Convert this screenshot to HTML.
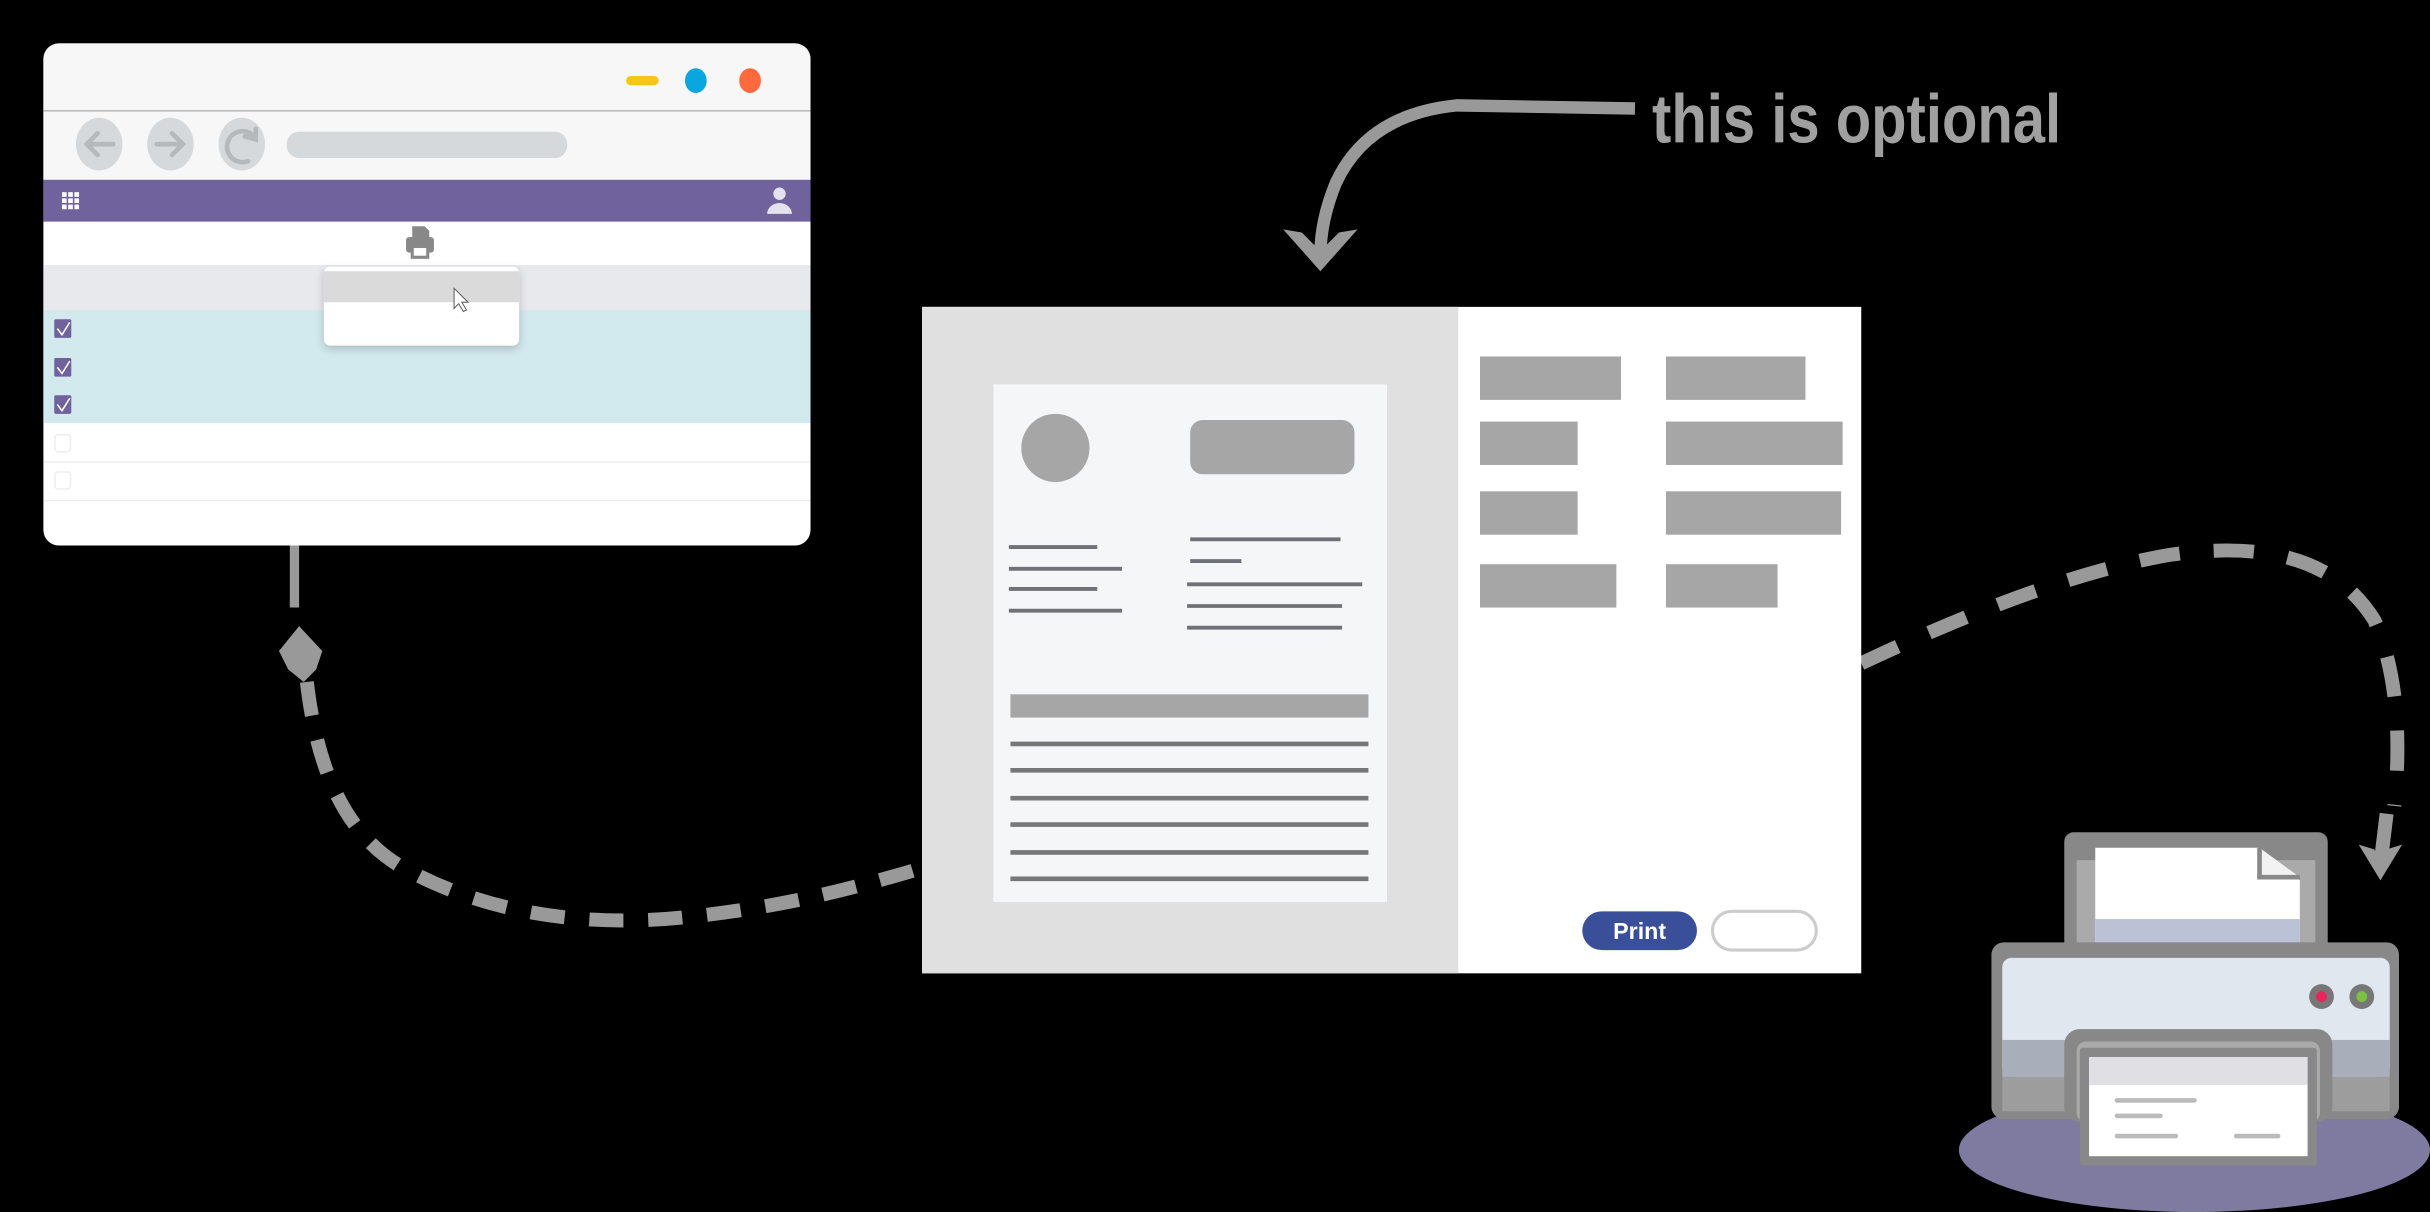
<!DOCTYPE html>
<html><head><meta charset="utf-8"><style>
html,body{margin:0;padding:0;background:#000;width:2430px;height:1212px;overflow:hidden}
svg{display:block}
</style></head><body>
<svg width="2430" height="1212" viewBox="0 0 1568 782" preserveAspectRatio="none" xmlns="http://www.w3.org/2000/svg">
<rect width="1568" height="782" fill="#000"/>
<g fill="none" stroke="#999" stroke-width="9">
<path d="M190 352 L190 392" stroke-width="6"/>
<path d="M198 440 C205 500 225 545 270 565 C320 590 380 598 440 592 C500 586 545 575 595 560" stroke-dasharray="22 16"/>
<path d="M1201 428 C1250 405 1330 370 1400 358 C1470 348 1510 365 1532 400 C1550 440 1548 490 1545 520" stroke-dasharray="26 22"/>
<path d="M1540 525 L1536 558"/>
<path d="M1055 70 L940 68 C900 72 875 90 862 118 C855 135 852 150 852 165" stroke-width="8"/>
</g>
<g fill="#999">
<polygon points="193,404 180,420 186,432 196,440 204,432 208,420"/>
<polygon points="828,148 852,175 876,148 864,150 852,162 840,150"/>
<polygon points="1522,545 1536,568 1550,545 1540,548 1536,556 1532,548"/>
</g>
<text x="1066" y="92" textLength="264" lengthAdjust="spacingAndGlyphs" font-family="'Liberation Sans',sans-serif" font-weight="bold" font-size="44" fill="#a0a0a0">this is optional</text>

<rect x="28" y="28" width="495" height="324" rx="10" fill="#fff"/>
<path d="M28 72 V38 a10 10 0 0 1 10 -10 H513 a10 10 0 0 1 10 10 V72 Z" fill="#f7f7f7"/>
<rect x="28" y="72" width="495" height="44" fill="#f7f7f7"/>
<line x1="28" y1="71.5" x2="523" y2="71.5" stroke="#bbb" stroke-width="1"/>
<rect x="404" y="49" width="21" height="6" rx="3" fill="#f5c518"/>
<ellipse cx="449" cy="52" rx="7" ry="8" fill="#0aa6e0"/>
<ellipse cx="484" cy="52" rx="7" ry="8" fill="#ff6a3d"/>
<g fill="#d5d9dc"><ellipse cx="64" cy="93" rx="15" ry="17"/><ellipse cx="110" cy="93" rx="15" ry="17"/><ellipse cx="156" cy="93" rx="15" ry="17"/></g>
<g stroke="#b5b9bc" stroke-width="3" fill="none" stroke-linecap="round"><path d="M73 93 H56 M63 86 L56 93 L63 100"/><path d="M101 93 H118 M111 86 L118 93 L111 100"/><path d="M160 104 A10 10 0 1 1 164 88 M158 88 L165 90 L165 83"/></g>
<rect x="185" y="85" width="181" height="17" rx="8" fill="#d5d9dc"/>
<rect x="28" y="116" width="495" height="27" fill="#6f629d"/>
<g fill="#fff"><rect x="40" y="124" width="3" height="3"/><rect x="44" y="124" width="3" height="3"/><rect x="48" y="124" width="3" height="3"/><rect x="40" y="128" width="3" height="3"/><rect x="44" y="128" width="3" height="3"/><rect x="48" y="128" width="3" height="3"/><rect x="40" y="132" width="3" height="3"/><rect x="44" y="132" width="3" height="3"/><rect x="48" y="132" width="3" height="3"/></g>
<circle cx="503" cy="125" r="4" fill="#e4e2ee"/><path d="M495 138 a8 7 0 0 1 16 0 Z" fill="#e4e2ee"/>
<g fill="#888"><path d="M266 146 h8 l3 3 v5 h-11 Z"/><rect x="262" y="153" width="18" height="10" rx="2"/><rect x="265" y="159" width="12" height="8"/></g>
<rect x="267" y="160" width="8" height="5" fill="#fff"/>
<rect x="28" y="171" width="495" height="29" fill="#e8e9ec"/>
<rect x="28" y="200" width="495" height="73" fill="#d2e9ee"/>
<line x1="28" y1="298" x2="523" y2="298" stroke="#eee"/>
<line x1="28" y1="323" x2="523" y2="323" stroke="#eee"/>
<g fill="#6f629d"><rect x="35" y="206" width="11" height="12" rx="1"/><rect x="35" y="231" width="11" height="12" rx="1"/><rect x="35" y="255" width="11" height="12" rx="1"/></g>
<g stroke="#fff" stroke-width="1" fill="none"><path d="M37 212 l3 4 l5 -8"/><path d="M37 237 l3 4 l5 -8"/><path d="M37 261 l3 4 l5 -8"/></g>
<g fill="none" stroke="#eee"><rect x="35.5" y="280.5" width="10" height="11" rx="2"/><rect x="35.5" y="304.5" width="10" height="11" rx="2"/></g>
<rect x="209" y="172" width="126" height="51" rx="4" fill="#fff" style="filter:drop-shadow(0 2px 3px rgba(0,0,0,.2))"/>
<rect x="209" y="175" width="126" height="20" fill="#dadada"/>
<path d="M293 186 v13 l3 -3 l3 5 l2 -1 l-3 -5 h4 Z" fill="#fff" stroke="#666" stroke-width=".7"/>

<rect x="595" y="198" width="606" height="430" fill="#fff"/>
<rect x="595" y="198" width="346" height="430" fill="#e0e0e0"/>
<rect x="641" y="248" width="254" height="334" fill="#f5f6f7"/>
<ellipse cx="681" cy="289" rx="22" ry="22" fill="#a6a6a6"/>
<rect x="768" y="271" width="106" height="35" rx="8" fill="#a6a6a6"/>
<g stroke="#6f7178" stroke-width="2.5"><path d="M651 353h57M651 367h73M651 380h57M651 394h73M768 348h97M768 362h33M766 377h113M766 391h100M766 405h100"/></g>
<rect x="652" y="448" width="231" height="15" fill="#a6a6a6"/>
<g stroke="#777" stroke-width="3"><path d="M652 480h231M652 497h231M652 515h231M652 532h231M652 550h231M652 567h231"/></g>
<g fill="#a6a6a6"><rect x="955" y="230" width="91" height="28"/><rect x="1075" y="230" width="90" height="28"/><rect x="955" y="272" width="63" height="28"/><rect x="1075" y="272" width="114" height="28"/><rect x="955" y="317" width="63" height="28"/><rect x="1075" y="317" width="113" height="28"/><rect x="955" y="364" width="88" height="28"/><rect x="1075" y="364" width="72" height="28"/></g>
<rect x="1021" y="588" width="74" height="25" rx="12.5" fill="#3a4f9a"/>
<text x="1058" y="606" text-anchor="middle" font-family="'Liberation Sans',sans-serif" font-weight="bold" font-size="15" fill="#fff">Print</text>
<rect x="1105" y="588" width="67" height="25" rx="12.5" fill="#fff" stroke="#ccc" stroke-width="2"/>

<ellipse cx="1416" cy="742" rx="152" ry="40" fill="#7f7aa0"/>
<rect x="1332" y="537" width="170" height="82" rx="6" fill="#888"/>
<rect x="1340" y="555" width="154" height="60" fill="#aaa"/>
<path d="M1352 547 H1458 L1484 568 V615 H1352 Z" fill="#fff"/>
<rect x="1352" y="593" width="132" height="22" fill="#bcc2d6"/>
<path d="M1458 547 V566 H1484" fill="#f2f2f2" stroke="#888" stroke-width="3"/>
<rect x="1285" y="608" width="263" height="114" rx="8" fill="#888"/>
<rect x="1292" y="618" width="250" height="77" rx="6" fill="#e1e7ee"/>
<rect x="1292" y="671" width="250" height="24" fill="#a9afba"/>
<rect x="1292" y="695" width="250" height="22" fill="#9d9d9d"/>
<circle cx="1498" cy="643" r="8" fill="#777"/><circle cx="1498" cy="643" r="3.5" fill="#e8245a"/>
<circle cx="1524" cy="643" r="8" fill="#777"/><circle cx="1524" cy="643" r="3.5" fill="#7cc242"/>
<rect x="1332" y="664" width="173" height="60" rx="10" fill="#888"/>
<rect x="1340" y="672" width="157" height="52" rx="6" fill="#aaa"/>
<rect x="1342" y="676" width="153" height="76" rx="2" fill="#888"/>
<rect x="1348" y="682" width="141" height="64" fill="#fff"/>
<rect x="1348" y="682" width="141" height="18" fill="#e0e0e4"/>
<g stroke="#bbb" stroke-width="3" stroke-linecap="round"><path d="M1366 710h50M1366 720h28M1366 733h38M1443 733h27"/></g>
</svg>
</body></html>
